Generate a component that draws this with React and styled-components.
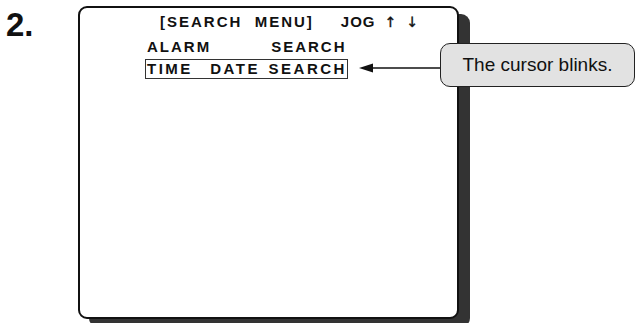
import styled, { createGlobalStyle } from "styled-components";

const GlobalStyle = createGlobalStyle`
  html, body {
    margin: 0;
    padding: 0;
    background: #ffffff;
  }
  body {
    font-family: "Liberation Sans", Arial, sans-serif;
    color: #111111;
  }
`;

export default function App() {
  return (
    <>
      <GlobalStyle />
      <Page>
        <Step>2.</Step>
        <Screen>
          <MenuText>
            <Header>
              <span>[SEARCH&nbsp;&nbsp;MENU]</span>
              <Jog>
                JOG <Arrow>↑</Arrow> <Arrow>↓</Arrow>
              </Jog>
            </Header>
            <Row>
              <span>ALARM</span>
              <span>SEARCH</span>
            </Row>
            <Cursor>TIME&nbsp;&nbsp;DATE SEARCH</Cursor>
          </MenuText>
        </Screen>
        <Pointer width="82" height="12" viewBox="0 0 82 12">
          <path d="M0 6 L14 1.5 L14 10.5 Z" fill="#111" />
          <line x1="13" y1="6" x2="82" y2="6" stroke="#111" strokeWidth="1.3" />
        </Pointer>
        <Callout>The cursor blinks.</Callout>
      </Page>
    </>
  );
}

const Page = styled.main`
  position: relative;
  width: 636px;
  height: 323px;
  overflow: hidden;
  display: flex;
  align-items: flex-start;
  padding: 6px 0 0 6px;
  box-sizing: border-box;
`;

const Step = styled.div`
  width: 72px;
  margin-top: 2px;
  font-size: 33px;
  line-height: 33px;
  font-weight: bold;
  color: #111;
`;

const Screen = styled.section`
  width: 381px;
  height: 313px;
  box-sizing: border-box;
  border: 2px solid #111;
  border-radius: 9px;
  background: #fff;
  box-shadow: 11px 8px 0 #333;
  padding: 5px 0 0 65px;
`;

const MenuText = styled.div`
  display: flex;
  flex-direction: column;
  align-items: flex-start;
  font-size: 15px;
  line-height: 18px;
  font-weight: bold;
  letter-spacing: 2px;
`;

const Header = styled.div`
  display: flex;
  gap: 27px;
  margin-left: 15px;
`;

const Jog = styled.span`
  letter-spacing: 1px;
  word-spacing: 4px;
`;

const Arrow = styled.span`
  font-family: "DejaVu Sans", sans-serif;
  font-size: 14px;
  font-weight: normal;
  -webkit-text-stroke: 0.4px #111;
`;

const Row = styled.div`
  display: flex;
  gap: 60px;
  margin: 7px 0 0 2px;
`;

const Cursor = styled.div`
  margin-top: 3px;
  border: 1.5px solid #333;
  padding: 0 0 0 1px;
  letter-spacing: 2.5px;
  word-spacing: 2px;
`;

const Pointer = styled.svg`
  position: absolute;
  left: 359px;
  top: 62px;
`;

const Callout = styled.div`
  position: absolute;
  left: 440px;
  top: 43px;
  width: 195px;
  height: 44px;
  box-sizing: border-box;
  display: flex;
  align-items: center;
  justify-content: center;
  background: #e2e2e2;
  border: 1.5px solid #222;
  border-radius: 10px;
  font-size: 19px;
  color: #111;
`;
